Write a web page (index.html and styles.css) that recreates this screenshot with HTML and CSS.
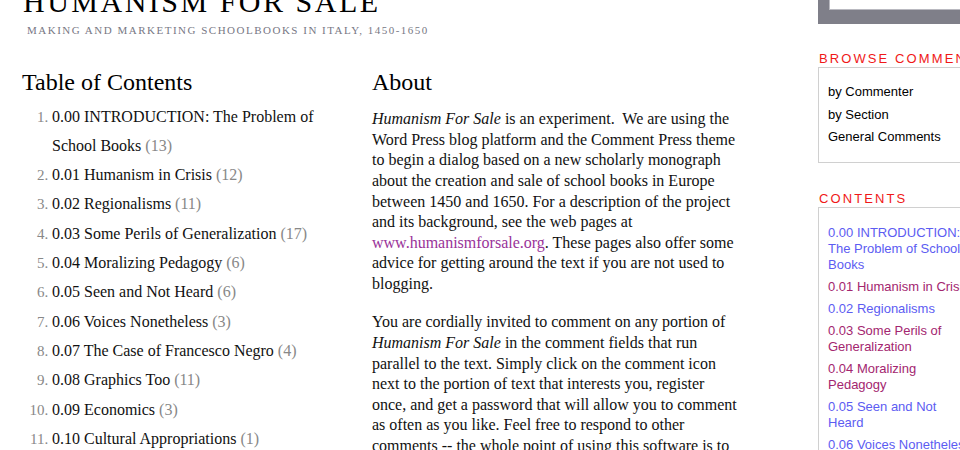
FILE: index.html
```html
<!DOCTYPE html>
<html>
<head>
<meta charset="utf-8">
<link rel="stylesheet" href="styles.css">
</head>
<body>
<div class="page">
  <div class="main">
    <header class="masthead">
      <h1 class="site-title">HUMANISM FOR SALE</h1>
      <div class="tagline">MAKING AND MARKETING SCHOOLBOOKS IN ITALY, 1450-1650</div>
    </header>
    <div class="columns">
      <section class="toc">
        <h2 class="heading">Table of Contents</h2>
        <ol class="toc-list">
          <li>0.00 INTRODUCTION: The Problem of School Books <span class="count">(13)</span></li>
          <li>0.01 Humanism in Crisis <span class="count">(12)</span></li>
          <li>0.02 Regionalisms <span class="count">(11)</span></li>
          <li>0.03 Some Perils of Generalization <span class="count">(17)</span></li>
          <li>0.04 Moralizing Pedagogy <span class="count">(6)</span></li>
          <li>0.05 Seen and Not Heard <span class="count">(6)</span></li>
          <li>0.06 Voices Nonetheless <span class="count">(3)</span></li>
          <li>0.07 The Case of Francesco Negro <span class="count">(4)</span></li>
          <li>0.08 Graphics Too <span class="count">(11)</span></li>
          <li>0.09 Economics <span class="count">(3)</span></li>
          <li>0.10 Cultural Appropriations <span class="count">(1)</span></li>
        </ol>
      </section>
      <section class="about">
        <h2 class="heading">About</h2>
        <p><em>Humanism For Sale</em> is an experiment.&nbsp; We are using the Word Press blog platform and the Comment Press theme to begin a dialog based on a new scholarly monograph about the creation and sale of school books in Europe between 1450 and 1650. For a description of the project and its background, see the web pages at <a class="link" href="#">www.humanismforsale.org</a>. These pages also offer some advice for getting around the text if you are not used to blogging.</p>
        <p>You are cordially invited to comment on any portion of <em>Humanism For Sale</em> in the comment fields that run parallel to the text. Simply click on the comment icon next to the portion of text that interests you, register once, and get a password that will allow you to comment as often as you like. Feel free to respond to other comments -- the whole point of using this software is to encourage discussion.</p>
      </section>
    </div>
  </div>
  <aside class="sidebar">
    <div class="search"><div class="search-field"></div></div>
    <h3 class="side-title">BROWSE COMMENTS</h3>
    <ul class="side-box browse">
      <li>by Commenter</li>
      <li>by Section</li>
      <li>General Comments</li>
    </ul>
    <h3 class="side-title">CONTENTS</h3>
    <ul class="side-box contents">
      <li class="blue">0.00 INTRODUCTION: The Problem of School Books</li>
      <li class="purple">0.01 Humanism in Crisis</li>
      <li class="blue">0.02 Regionalisms</li>
      <li class="purple">0.03 Some Perils of Generalization</li>
      <li class="purple">0.04 Moralizing Pedagogy</li>
      <li class="blue">0.05 Seen and Not Heard</li>
      <li class="blue">0.06 Voices Nonetheless</li>
      <li class="blue">0.07 The Case of Francesco Negro</li>
    </ul>
  </aside>
</div>
</body>
</html>
```
FILE: styles.css
```css
html, body {
  margin: 0;
  padding: 0;
  background: #fff;
  overflow: hidden;
  height: 450px;
}
body {
  font-family: "Liberation Serif", "Times New Roman", serif;
  color: #111;
}
.page {
  display: flex;
  align-items: flex-start;
}
.main {
  flex: 0 0 818px;
}
.masthead {
  padding-left: 23px;
}
.site-title {
  margin: -13px 0 0 0;
  font-size: 30px;
  line-height: 30px;
  font-weight: normal;
  letter-spacing: 2.5px;
  color: #000;
}
.tagline {
  margin: 6px 0 0 4px;
  font-size: 11px;
  line-height: 14px;
  letter-spacing: 1.5px;
  color: #777784;
}
.columns {
  display: flex;
  padding: 31px 0 0 22px;
}
.toc {
  flex: 0 0 350px;
}
.about {
  flex: 0 0 370px;
}
.heading {
  margin: 0;
  font-size: 24px;
  line-height: 28px;
  font-weight: normal;
  color: #000;
}
.toc-list {
  margin: 5.6px 0 0 0;
  padding-left: 30px;
  font-size: 16px;
  line-height: 29.3px;
  width: 290px;
}
.toc-list li::marker {
  color: #888;
  font-size: 15px;
}
.count {
  color: #888;
}
.about p {
  margin: 13.3px 0 0 0;
  font-size: 16px;
  line-height: 20.6px;
}
.about p + p {
  margin-top: 17.7px;
}
.link {
  color: #993399;
  text-decoration: none;
}
.sidebar {
  flex: 0 0 200px;
  font-family: "Liberation Sans", Arial, sans-serif;
}
.search {
  height: 10px;
  padding: 0 0 14px 11px;
  background: #7f7f89;
}
.search-field {
  height: 9px;
  background: #fff;
  border: 1px solid #b9b9c0;
  border-top: none;
}
.side-title {
  margin: 27px 0 0 1px;
  font-size: 13px;
  line-height: 16px;
  font-weight: normal;
  letter-spacing: 2.1px;
  color: #f01818;
}
.side-box {
  list-style: none;
  margin: 0;
  border: 1px solid #d0d0d0;
  border-right: none;
  font-size: 13px;
}
.browse {
  padding: 13px 0 13px 9px;
  line-height: 22.5px;
  color: #000;
}
.sidebar .browse + .side-title {
  margin-top: 28.7px;
}
.contents {
  padding: 16.4px 0 10px 9px;
  line-height: 16px;
}
.contents li {
  width: 144px;
  margin-bottom: 6px;
}
.blue {
  color: #5c5cf2;
}
.purple {
  color: #a3266f;
}
```
